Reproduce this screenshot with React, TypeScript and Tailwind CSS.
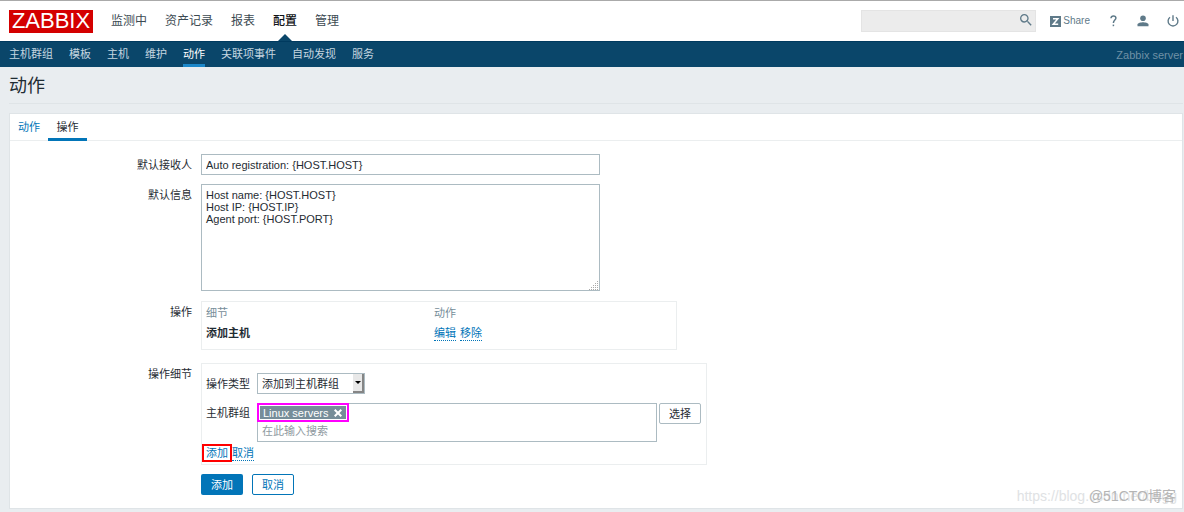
import { MdSearch } from "react-icons/md";

const mainMenu = ["监测中", "资产记录", "报表", "配置", "管理"];
const subMenu = ["主机群组", "模板", "主机", "维护", "动作", "关联项事件", "自动发现", "服务"];

const Header = () => (
  <header className="border-t border-[#aaaaaa] bg-white">
    <div className="flex h-10 items-center justify-between pl-[9px] pr-[5px]">
      <div className="flex items-center gap-[18px]">
        <a href="#" className="flex h-[23px] w-[84px] items-center justify-center bg-[#d40000] text-[22px] leading-none text-white">
          ZABBIX
        </a>
        <nav className="flex gap-[18px] text-[12px]">
          {mainMenu.map((item) => (
            <a
              key={item}
              href="#"
              className={item === "配置" ? "relative font-medium leading-[42px] text-[#0f1215]" : "leading-[42px] text-[#3c4a52]"}
            >
              {item}
              {item === "配置" && (
                <span className="absolute bottom-px left-1/2 -translate-x-1/2 border-x-[7px] border-b-[7px] border-x-transparent border-b-[#0a466a]"></span>
              )}
            </a>
          ))}
        </nav>
      </div>

      <div className="flex items-center text-[#5f7a89]">
        <form className="relative mr-3.5 h-[22px] w-[175px]">
          <input type="text" aria-label="Search" className="h-full w-full border border-[#e4e4e4] bg-[#ececec] px-1.5 outline-none" />
          <button type="button" aria-label="Search" className="absolute right-0.5 top-0.5">
            <MdSearch size={16} />
          </button>
        </form>
        <a href="#" className="mr-5 flex items-center gap-0.5 text-[10px]">
          <svg width="11" height="11" viewBox="0 0 11 11">
            <rect width="11" height="11" fill="currentColor" />
            <path d="M3 2.8h4.800L3.2 8.2H8.2" fill="none" stroke="#fff" strokeWidth="1.5" />
          </svg>
          Share
        </a>
        <a href="#" aria-label="Help" className="mr-5">
          <svg width="7" height="12" viewBox="0 0 7 12" fill="none" stroke="currentColor" strokeWidth="1.5">
            <path d="M1 3.200C1 1.600 2 .9 3.400.9s2.500.8 2.500 2.200C5.900 5 3.400 5.200 3.400 7.900" />
            <path d="M3.400 9.600v1.600" />
          </svg>
        </a>
        <a href="#" aria-label="Profile" className="mr-[18px]">
          <svg width="12" height="12" viewBox="0 0 12 12" fill="currentColor">
            <circle cx="6" cy="3.3" r="2.8" />
            <path d="M.5 11.2V9.6C.5 8 4 7.2 6 7.2s5.500.8 5.500 2.400v1.600z" />
          </svg>
        </a>
        <a href="#" aria-label="Sign out">
          <svg width="12" height="12" viewBox="0 0 12 12" fill="none" stroke="currentColor" strokeWidth="1.4">
            <path d="M3 2.200a4.900 4.900 0 1 0 6 0M6 .3v5.700" />
          </svg>
        </a>
      </div>
    </div>

    <div className="flex h-[26px] items-center justify-between border-t border-[#003a5f] bg-[#0a466a] pl-[9px] pr-px">
      <nav className="flex h-full gap-4">
        {subMenu.map((item) => (
          <a
            key={item}
            href="#"
            className={
              item === "动作"
                ? "border-b-[3px] border-[#1b87c9] leading-6 text-white"
                : "leading-6 text-[#c5d6e0]"
            }
          >
            {item}
          </a>
        ))}
      </nav>
      <span className="text-[#6f91a6]">Zabbix server</span>
    </div>
  </header>
);

const linkAction = "border-b border-dotted border-[#0275b8] leading-[14px] text-[#0275b8]";

const OperationsTable = () => (
  <div className="h-[49px] w-[476px] border border-[#ebeeef] px-1">
    <table className="w-full table-fixed text-left">
      <thead>
        <tr className="h-[22px] text-[#768d99]">
          <th className="w-[228px] font-normal">细节</th>
          <th className="font-normal">动作</th>
        </tr>
      </thead>
      <tbody>
        <tr className="h-[18px]">
          <td className="font-bold">添加主机</td>
          <td>
            <div className="flex gap-1">
              <button type="button" className={linkAction}>编辑</button>
              <button type="button" className={linkAction}>移除</button>
            </div>
          </td>
        </tr>
      </tbody>
    </table>
  </div>
);

const OperationDetails = () => (
  <div className="h-[102px] w-[506px] border border-[#ebeeef] pl-1 pt-[9px]">
    <div className="flex items-center">
      <label htmlFor="operationtype" className="w-[51px]">操作类型</label>
      <div className="relative h-[21px] w-[108px]">
        <select id="operationtype" className="h-full w-full appearance-none border border-[#acbbc2] bg-white pl-1 outline-none">
          <option>添加到主机群组</option>
        </select>
        <span className="pointer-events-none absolute right-px top-px flex h-[19px] w-[11px] items-center justify-center border-b-2 border-r-2 border-[#858585] bg-[#e8e8e8]">
          <span className="border-x-[3px] border-t-[3px] border-x-transparent border-t-black"></span>
        </span>
      </div>
    </div>

    <div className="mt-[9px] flex items-start">
      <label htmlFor="hostgroup" className="w-[51px] leading-[21px]">主机群组</label>
      <div className="h-[39px] w-[400px] border border-[#acbbc2]">
        <div className="-ml-px -mt-px flex h-[19px] w-[92px] items-center justify-between border-2 border-[#ff00ff] bg-[#768d99] bg-clip-content p-px text-white">
          <span className="pl-[3px]">Linux servers</span>
          <button type="button" aria-label="Remove Linux servers" className="mr-1">
            <svg width="8" height="8" viewBox="0 0 8 8" stroke="currentColor" strokeWidth="2">
              <path d="M.7.7l6.600 6.600M7.300.7L.7 7.300" />
            </svg>
          </button>
        </div>
        <input
          id="hostgroup"
          type="text"
          placeholder="在此输入搜索"
          className="block h-[18px] w-full px-1 outline-none placeholder:text-[#8f9a9f]"
        />
      </div>
      <button type="button" className="ml-0.5 h-[21px] w-[42px] rounded-xs border border-[#acbbc2]">选择</button>
    </div>

    <div className="-ml-1 mt-0.5 flex items-center">
      <span className="flex h-[18px] w-[30px] items-center justify-center border-2 border-[#ff0000]">
        <button type="button" className="text-[#0275b8]">添加</button>
      </span>
      <button type="button" className={linkAction}>取消</button>
    </div>
  </div>
);

export default function App() {
  return (
    <div className="relative min-h-screen bg-[#e9edf0] font-['Liberation_Sans','Noto_Sans_CJK_SC',sans-serif] text-[11px] leading-[14px] text-[#1f2c33]">
      <Header />
      <main className="pb-[3px] pl-[9px] pr-px">
        <h1 className="border-b border-[#dfe4e7] pb-[3px] pt-[5px] text-[18px] leading-7">动作</h1>

        <div className="mt-[9px] border border-[#dfe4e7] bg-white pb-[13px]">
          <div role="tablist" className="flex h-[27px] border-b border-[#ebeeef]">
            <button type="button" role="tab" aria-selected="false" className="w-[38px] text-[#0275b8]">动作</button>
            <button type="button" role="tab" aria-selected="true" className="h-[27px] w-[39px] border-b-[3px] border-[#0275b8] pt-0.5">
              操作
            </button>
          </div>

          <div className="mt-[13px] grid grid-cols-[182px_1fr] gap-x-[9px]">
            <label htmlFor="def_shortdata" className="pt-1 text-right">默认接收人</label>
            <input
              id="def_shortdata"
              type="text"
              defaultValue="Auto registration: {HOST.HOST}"
              className="mb-[9px] h-[21px] w-[399px] border border-[#acbbc2] px-1 outline-none"
            />

            <label htmlFor="def_longdata" className="pt-1 text-right">默认信息</label>
            <div className="relative mb-2.5 h-[107px] w-[399px]">
              <textarea
                id="def_longdata"
                defaultValue={"Host name: {HOST.HOST}\nHost IP: {HOST.IP}\nAgent port: {HOST.PORT}"}
                className="block h-full w-full resize-none border border-[#acbbc2] px-1 py-1 leading-3 outline-none"
              />
              <svg width="10" height="10" className="absolute bottom-px right-px" stroke="#aaaaaa" strokeDasharray="1 1">
                <path d="M0 9.500h10M2 7.500h8M4 5.500h6M6 3.500h4M8 1.500h2" />
              </svg>
            </div>

            <span className="pt-1 text-right">操作</span>
            <div className="mb-[13px]">
              <OperationsTable />
            </div>

            <span className="pt-1 text-right">操作细节</span>
            <div className="mb-[9px]">
              <OperationDetails />
            </div>

            <div className="col-start-2 flex gap-[9px]">
              <button type="submit" className="h-[21px] w-[42px] rounded-xs bg-[#0275b8] text-white">添加</button>
              <button type="button" className="h-[21px] w-[42px] rounded-xs border border-[#0275b8] text-[#0275b8]">取消</button>
            </div>
          </div>
        </div>
      </main>

      <div className="pointer-events-none absolute bottom-2 right-[7px] text-[14px] leading-4 text-[#e0e2e4]">https://blog.csdn.net/bugg</div>
      <div className="pointer-events-none absolute bottom-2 right-2 text-[14px] leading-4 text-[#b4b4b4]">@51CTO博客</div>
    </div>
  );
}
